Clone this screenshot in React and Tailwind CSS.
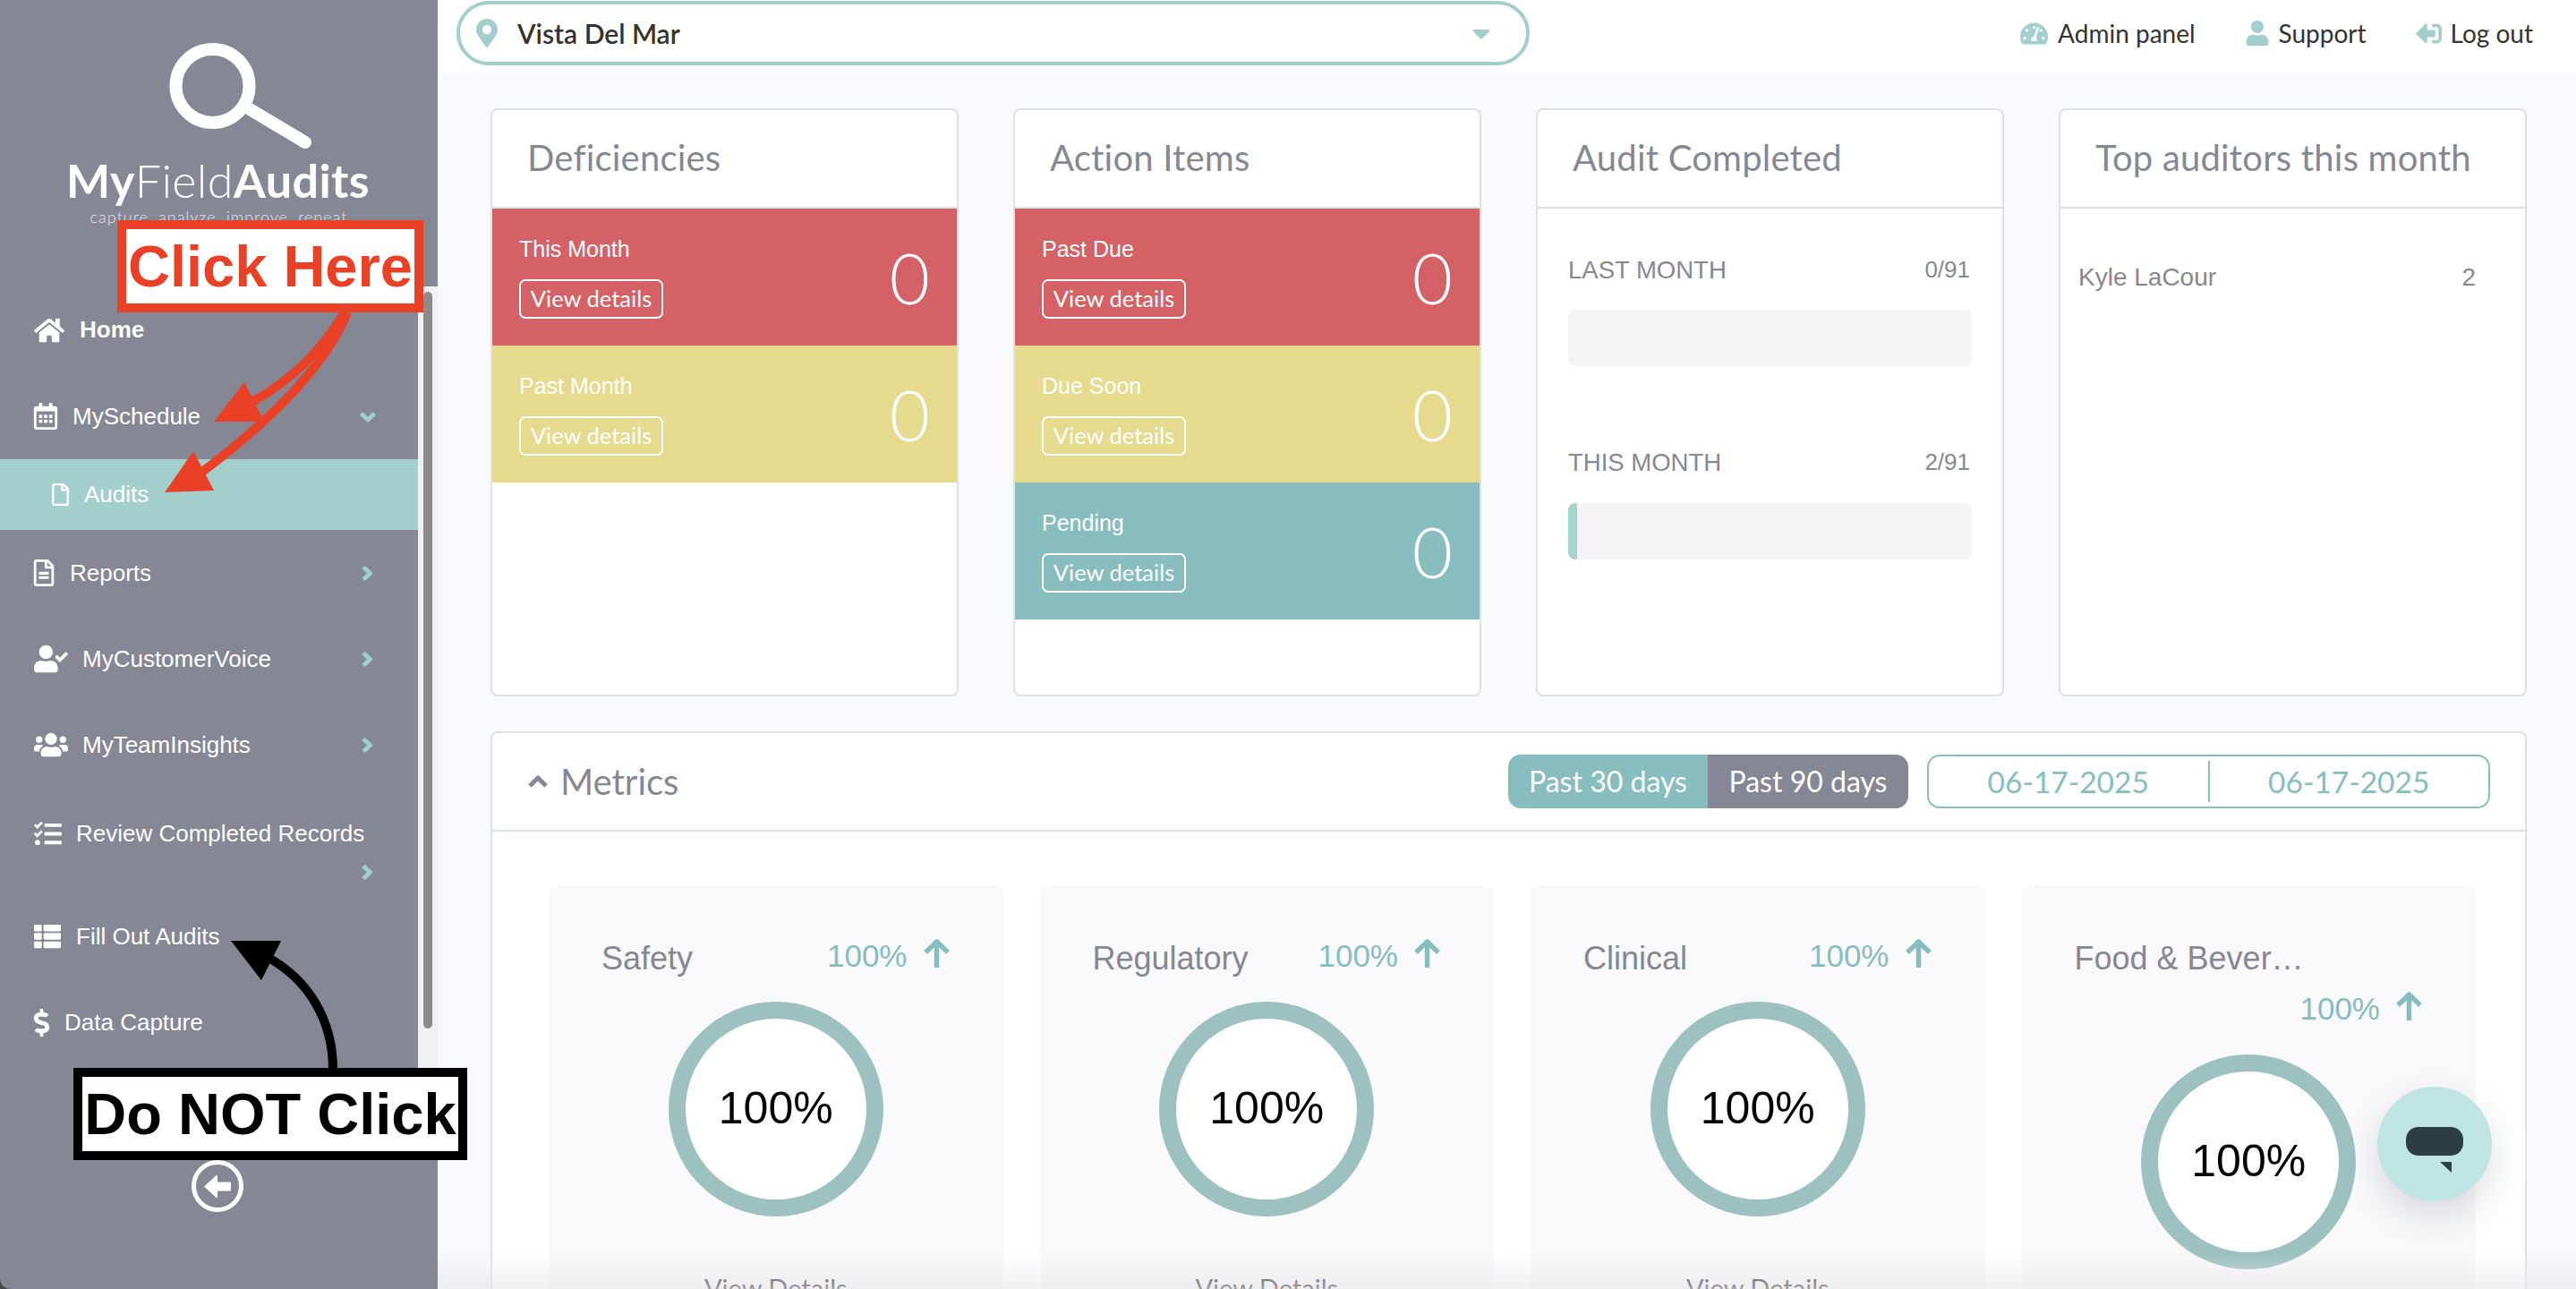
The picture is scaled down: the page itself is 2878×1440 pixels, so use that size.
import {
  FaHome,
  FaRegCalendarAlt,
  FaRegFile,
  FaRegFileAlt,
  FaUserCheck,
  FaUsers,
  FaTasks,
  FaThList,
  FaDollarSign,
  FaMapMarkerAlt,
  FaTachometerAlt,
  FaUser,
  FaSignOutAlt,
  FaCaretDown,
} from "react-icons/fa";

function ChevronRight({ className = "" }) {
  return (
    <svg className={className} width="14" height="19" viewBox="0 0 14 19" fill="none" stroke="#9fcfcb" strokeWidth="5" strokeLinejoin="round">
      <polyline points="3,2.5 10.5,9.5 3,16.5" />
    </svg>
  );
}

function ChevronDown({ className = "" }) {
  return (
    <svg className={className} width="20" height="13" viewBox="0 0 20 13" fill="none" stroke="#9fcfcb" strokeWidth="5" strokeLinejoin="round">
      <polyline points="2.5,3 10,10 17.5,3" />
    </svg>
  );
}

function NavRow({ icon, label, chevron, className = "" }) {
  return (
    <div className={`flex items-center pl-[38px] text-[26px] text-white ${chevron === "down" ? "pr-[46px]" : "pr-[50px]"} ${className}`}>
      {icon}
      <span>{label}</span>
      {chevron === "right" && <ChevronRight className="ml-auto" />}
      {chevron === "down" && <ChevronDown className="ml-auto" />}
    </div>
  );
}

function Sidebar() {
  return (
    <aside className="flex h-full w-[489px] shrink-0 flex-col rounded-bl-[12px] bg-[#858894]">
      <div className="flex h-[320px] flex-col items-center pt-[40px] text-white">
        <svg width="320" height="130" viewBox="0 0 320 130" fill="none" stroke="#fff" strokeWidth="14" strokeLinecap="round">
          <circle cx="152.5" cy="56" r="41" />
          <line x1="194" y1="82" x2="256" y2="119" />
        </svg>
        <div className="mt-[1px] pr-[2px] font-['Lato',sans-serif] text-[52px] leading-[60px] tracking-[0.4px]">
          <span className="font-bold">My</span>
          <span className="font-light">Field</span>
          <span className="font-bold">Audits</span>
        </div>
        <div className="font-['Lato',sans-serif] text-[18px] leading-[22px] font-light tracking-[1px] text-[#e4e5e9]">
          capture. analyze. improve. repeat
        </div>
      </div>

      <div className="flex h-[950px]">
        <nav className="flex-1">
          <NavRow className="h-[97px] font-bold" icon={<FaHome className="mr-[17px] text-[34px]" />} label="Home" />
          <NavRow className="h-[96px]" icon={<FaRegCalendarAlt className="mr-[15px] -ml-[2px] text-[30px]" />} label="MySchedule" chevron="down" />
          <div className="flex h-[79px] items-center bg-[#a2cfcc] pl-[55px] text-[26px] text-white">
            <FaRegFile className="mr-[14px] text-[25px]" />
            <span>Audits</span>
          </div>
          <NavRow className="h-[96px]" icon={<FaRegFileAlt className="mr-[14px] -ml-[4px] text-[30px]" />} label="Reports" chevron="right" />
          <NavRow className="h-[96px]" icon={<FaUserCheck className="mr-[16px] text-[38px]" />} label="MyCustomerVoice" chevron="right" />
          <NavRow className="h-[96px]" icon={<FaUsers className="mr-[16px] text-[38px]" />} label="MyTeamInsights" chevron="right" />
          <div className="h-[118px] pt-[32px] pr-[50px] pl-[38px] text-[26px] text-white">
            <div className="flex items-center">
              <FaTasks className="mr-[16px] text-[31px]" />
              <span>Review Completed Records</span>
            </div>
            <div className="mt-[14px] flex justify-end">
              <ChevronRight />
            </div>
          </div>
          <NavRow className="h-[96px]" icon={<FaThList className="mr-[17px] text-[30px]" />} label="Fill Out Audits" />
          <NavRow className="h-[96px]" icon={<FaDollarSign className="mr-[10px] -ml-[7px] text-[31px]" />} label="Data Capture" />
        </nav>
        <div className="w-[22px] bg-[#f1f1f1] px-[6px] pt-[6px]">
          <div className="h-[823px] rounded-full bg-[#8a8a8a]" />
        </div>
      </div>

      <div className="mt-[26px] flex justify-center pr-[3px]">
        <div className="flex h-[58px] w-[58px] items-center justify-center rounded-full border-[5px] border-white">
          <svg width="30" height="27" viewBox="0 0 30 27" fill="#fff" stroke="#fff" strokeWidth="2" strokeLinejoin="round">
            <polygon points="1.5,13.5 14,2 14,25" />
            <rect x="13" y="9.5" width="16" height="8" />
          </svg>
        </div>
      </div>
    </aside>
  );
}

function TopBar() {
  return (
    <header className="flex h-[81px] items-center bg-white pr-[48px] pb-[7px] pl-[21px]">
      <div className="flex h-[72px] w-[1199px] items-center rounded-full border-[4px] border-[#a2cfcc] pr-[34px] pl-[14px]">
        <FaMapMarkerAlt className="mr-[18px] text-[32px] text-[#a2cfcc]" />
        <span className="font-['Lato',sans-serif] text-[30px] font-semibold text-[#333]">Vista Del Mar</span>
        <FaCaretDown className="ml-auto text-[32px] text-[#a2cfcc]" />
      </div>
      <div className="ml-auto flex items-center font-['Lato',sans-serif] text-[28px] text-[#333]">
        <FaTachometerAlt className="mr-[11px] text-[31px] text-[#a2cfcc]" />
        <span>Admin panel</span>
        <FaUser className="mr-[10px] ml-[55px] text-[28px] text-[#a2cfcc]" />
        <span>Support</span>
        <FaSignOutAlt className="mr-[10px] ml-[55px] -scale-x-100 text-[29px] text-[#a2cfcc]" />
        <span>Log out</span>
      </div>
    </header>
  );
}

function Tile({ color, label }) {
  return (
    <div className={`flex h-[153px] items-center justify-between px-[30px] text-white ${color}`}>
      <div>
        <div className="text-[25px] leading-[30px]">{label}</div>
        <div className="mt-[19px] flex h-[44px] w-[161px] items-center justify-center rounded-[7px] border-2 border-white pb-[2px] font-['Lato',sans-serif] text-[25.5px]">
          View details
        </div>
      </div>
      <div className="font-['Lato',sans-serif] text-[78px] leading-none font-light">0</div>
    </div>
  );
}

function Card({ title, children }) {
  return (
    <section className="h-[657px] overflow-hidden rounded-[8px] border-2 border-[#e0e1e3] bg-white">
      <div className="flex h-[110px] items-center border-b-2 border-[#e0e1e3] pb-[2px] pl-[39px] font-['Lato',sans-serif] text-[40px] tracking-[0.2px] text-[#858894]">
        {title}
      </div>
      {children}
    </section>
  );
}

function Progress({ label, value, fill }) {
  return (
    <div>
      <div className="flex items-center justify-between pr-[2px] text-[#858894]">
        <span className="text-[27.5px]">{label}</span>
        <span className="text-[26px]">{value}</span>
      </div>
      <div className="mt-[24px] h-[63px] overflow-hidden rounded-[8px] bg-[#f4f4f4]">
        {fill && <div className="h-full w-[10px] bg-[#a5d3cf]" />}
      </div>
    </div>
  );
}

function ArrowUp() {
  return (
    <svg className="ml-[17px]" width="31" height="32" viewBox="0 0 31 32" fill="none" stroke="#87bdbe" strokeWidth="5.5" strokeLinejoin="round">
      <line x1="15.5" y1="4" x2="15.5" y2="32" />
      <polyline points="3,15 15.5,3 28,15" />
    </svg>
  );
}

function MetricCard({ title }) {
  return (
    <div className="h-[600px] rounded-[10px] bg-[#f9f9fb] px-[59px] pt-[60px]">
      <div className="flex flex-wrap items-center justify-between">
        <span className="h-[59px] pt-[1px] text-[36px] leading-[42px] text-[#858894]">{title}</span>
        <span className="ml-auto flex h-[59px] items-start text-[35px] leading-[38px] text-[#87bdbe]">
          100%
          <ArrowUp />
        </span>
      </div>
      <div className="mx-auto mt-[11px] flex h-[240px] w-[240px] items-center justify-center rounded-full border-[19px] border-[#9cc1bf] bg-white pb-[2px] text-[50px] text-black">
        100%
      </div>
      <div className="mt-[58px] text-center font-['Lato',sans-serif] text-[29px] text-[#333]">View Details</div>
    </div>
  );
}

function Metrics() {
  return (
    <section className="mt-[39px] h-[700px] rounded-[8px] border-2 border-[#e0e1e3] bg-white">
      <div className="flex h-[110px] items-center border-b-2 border-[#e0e1e3] pr-[39px] pl-[39px]">
        <svg className="mr-[13px]" width="24" height="15" viewBox="0 0 24 15" fill="none" stroke="#858894" strokeWidth="5" strokeLinejoin="round">
          <polyline points="3,12 12,3 21,12" />
        </svg>
        <span className="font-['Lato',sans-serif] text-[40px] text-[#858894]">Metrics</span>
        <div className="ml-auto flex font-['Lato',sans-serif] text-[32px] text-white">
          <div className="flex h-[60px] w-[223px] items-center justify-center rounded-l-[14px] bg-[#87bdbe]">Past 30 days</div>
          <div className="flex h-[60px] w-[224px] items-center justify-center rounded-r-[14px] bg-[#858894]">Past 90 days</div>
        </div>
        <div className="ml-[21px] flex h-[60px] w-[629px] items-center rounded-[14px] border-2 border-[#87bdbe] font-['Lato',sans-serif] text-[33.5px] text-[#87bdbe]">
          <span className="flex-1 text-center">06-17-2025</span>
          <span className="h-[46px] w-[2px] bg-[#87bdbe]" />
          <span className="flex-1 text-center">06-17-2025</span>
        </div>
      </div>
      <div className="grid grid-cols-4 gap-[41px] pt-[60px] pr-[55px] pl-[63px]">
        <MetricCard title="Safety" />
        <MetricCard title="Regulatory" />
        <MetricCard title="Clinical" />
        <MetricCard title="Food & Bever…" />
      </div>
    </section>
  );
}

function Annotations() {
  return (
    <>
      <svg className="pointer-events-none absolute top-0 left-0" width="560" height="1200" viewBox="0 0 560 1200" fill="none">
        <path d="M385 349 Q345 415 280 450" stroke="#ea4025" strokeWidth="10" />
        <path d="M388 349 Q355 430 226 527" stroke="#ea4025" strokeWidth="10" />
        <polygon points="239,471 273,427 295,471" fill="#ea4025" />
        <polygon points="184,550 216,504 239,548" fill="#ea4025" />
        <path d="M372 1195 C372 1140 345 1095 300 1070" stroke="#000" strokeWidth="10" />
        <polygon points="258,1051 314,1051 292,1095" fill="#000" />
      </svg>
      <div className="absolute top-[246px] left-[131px] flex h-[103px] w-[342px] items-center justify-center border-[10px] border-[#ea4025] bg-white text-[65px] leading-none font-bold whitespace-nowrap text-[#ea4025]">
        Click Here
      </div>
      <div className="absolute top-[1193px] left-[82px] flex h-[103px] w-[440px] items-center justify-center border-[10px] border-black bg-white text-[65px] leading-none font-bold whitespace-nowrap text-black">
        Do NOT Click
      </div>
    </>
  );
}

function ChatButton() {
  return (
    <div className="absolute top-[1214px] left-[2656px] flex h-[128px] w-[128px] items-center justify-center rounded-full bg-[#c0e4e1] shadow-[0_16px_40px_rgba(60,70,90,0.18)]">
      <svg className="mt-[14px]" width="64" height="52" viewBox="0 0 64 52">
        <rect x="0" y="0" width="64" height="32" rx="14" fill="#2c3e40" />
        <polygon points="38,39 51,39 51,51" fill="#2c3e40" />
      </svg>
    </div>
  );
}

export default function App() {
  return (
    <div className="relative flex h-screen w-full overflow-hidden bg-[#4a4a4a] font-['Liberation_Sans',Arial,sans-serif]">
      <Sidebar />
      <main className="relative h-full flex-1 overflow-hidden bg-[#f8f9fc]">
        <TopBar />
        <div className="pt-[40px] pr-[55px] pl-[59px]">
          <div className="grid grid-cols-4 gap-[61px]">
            <Card title="Deficiencies">
              <Tile color="bg-[#d46165]" label="This Month" />
              <Tile color="bg-[#e6da8f]" label="Past Month" />
            </Card>
            <Card title="Action Items">
              <Tile color="bg-[#d46165]" label="Past Due" />
              <Tile color="bg-[#e6da8f]" label="Due Soon" />
              <Tile color="bg-[#87bdbe]" label="Pending" />
            </Card>
            <Card title="Audit Completed">
              <div className="flex flex-col gap-[87px] px-[34px] pt-[48px]">
                <Progress label="LAST MONTH" value="0/91" />
                <Progress label="THIS MONTH" value="2/91" fill />
              </div>
            </Card>
            <Card title="Top auditors this month">
              <div className="flex items-center justify-between pt-[56px] pr-[55px] pl-[20px] text-[28px] text-[#858894]">
                <span>Kyle LaCour</span>
                <span>2</span>
              </div>
            </Card>
          </div>
          <Metrics />
        </div>
        <div className="pointer-events-none absolute inset-x-0 bottom-0 h-[40px] bg-linear-to-b from-transparent to-[#e6e6ea]/60" />
      </main>
      <ChatButton />
      <Annotations />
    </div>
  );
}
